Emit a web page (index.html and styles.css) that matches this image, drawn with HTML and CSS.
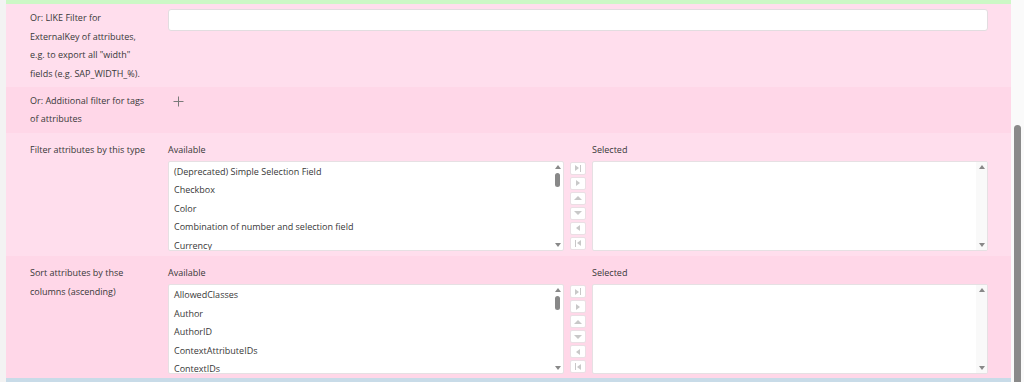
FILE: index.html
```html
<!DOCTYPE html>
<html>
<head>
    <link rel="stylesheet" href="styles.css">
</head>
<body>
  <div class="edge"></div>
  <div class="page">
    <div class="topbar"></div>

    <div class="row light row-like">
      <div class="label">Or: LIKE Filter for ExternalKey of attributes, e.g. to export all "width" fields (e.g. SAP_WIDTH_%).</div>
      <div class="field">
        <input class="text-input" type="text">
      </div>
    </div>

    <div class="row dark row-tags">
      <div class="label">Or: Additional filter for tags of attributes</div>
      <div class="field">
        <svg class="plus" width="11" height="11" viewBox="0 0 11 11">
          <path d="M5.5 0.5v10M0.5 5.5h10" stroke="#7a7a7a" stroke-width="1" fill="none"/>
        </svg>
      </div>
    </div>

    <div class="row light row-list">
      <div class="label">Filter attributes by this type</div>
      <div class="dual">
        <div class="col">
          <div class="col-title">Available</div>
          <div class="listbox">
            <ul class="items">
              <li>(Deprecated) Simple Selection Field</li>
              <li>Checkbox</li>
              <li>Color</li>
              <li>Combination of number and selection field</li>
              <li>Currency</li>
            </ul>
            <div class="vscroll">
              <span class="arr up"></span>
              <span class="thumb"></span>
              <span class="arr down"></span>
            </div>
          </div>
        </div>
        <div class="buttons">
          <span class="btn"><i class="tri right"></i><i class="bar"></i></span>
          <span class="btn"><i class="tri right"></i></span>
          <span class="btn"><i class="tri up"></i></span>
          <span class="btn"><i class="tri down"></i></span>
          <span class="btn"><i class="tri left"></i></span>
          <span class="btn"><i class="bar"></i><i class="tri left"></i></span>
        </div>
        <div class="col">
          <div class="col-title">Selected</div>
          <div class="listbox">
            <ul class="items"></ul>
            <div class="vscroll track">
              <span class="arr up"></span>
              <span class="arr down"></span>
            </div>
          </div>
        </div>
      </div>
    </div>

    <div class="row dark row-list row-last">
      <div class="label">Sort attributes by thse columns (ascending)</div>
      <div class="dual">
        <div class="col">
          <div class="col-title">Available</div>
          <div class="listbox">
            <ul class="items">
              <li>AllowedClasses</li>
              <li>Author</li>
              <li>AuthorID</li>
              <li>ContextAttributeIDs</li>
              <li>ContextIDs</li>
            </ul>
            <div class="vscroll">
              <span class="arr up"></span>
              <span class="thumb"></span>
              <span class="arr down"></span>
            </div>
          </div>
        </div>
        <div class="buttons">
          <span class="btn"><i class="tri right"></i><i class="bar"></i></span>
          <span class="btn"><i class="tri right"></i></span>
          <span class="btn"><i class="tri up"></i></span>
          <span class="btn"><i class="tri down"></i></span>
          <span class="btn"><i class="tri left"></i></span>
          <span class="btn"><i class="bar"></i><i class="tri left"></i></span>
        </div>
        <div class="col">
          <div class="col-title">Selected</div>
          <div class="listbox">
            <ul class="items"></ul>
            <div class="vscroll track">
              <span class="arr up"></span>
              <span class="arr down"></span>
            </div>
          </div>
        </div>
      </div>
    </div>
  </div>
  <div class="scrollbar">
    <div class="scroll-thumb"></div>
  </div>
</body>
</html>
```

FILE: styles.css
```css
html, body {
    margin: 0;
    height: 382px;
    overflow: hidden;
}

body {
    display: flex;
    font-family: "Open Sans", "DejaVu Sans", sans-serif;
    font-size: 9px;
    color: #383838;
    background: #fafafa;
}

.edge {
    width: 6px;
    background: #f3f3f3;
}

.page {
    flex: 1;
    display: flex;
    flex-direction: column;
    background: #ffdeec;
}

.topbar {
    height: 4px;
    background: #ccf8c6;
}

.row {
    display: grid;
    grid-template-columns: 162px 1fr;
    padding-right: 23px;
}

.light {
    background: #ffdeed;
}

.dark {
    background: #ffd7e8;
}

.label {
    padding-left: 24px;
    padding-right: 20px;
    line-height: 18.7px;
}

.row-like {
    height: 83px;
    padding-top: 5px;
    box-sizing: border-box;
}

.text-input {
    display: block;
    width: 100%;
    height: 22px;
    margin: 0;
    box-sizing: border-box;
    border: 1px solid #e2dde0;
    border-radius: 3px;
    background: #fff;
}

.row-tags {
    height: 46px;
    padding-top: 5px;
    box-sizing: border-box;
}

.plus {
    display: block;
    margin: 4px 0 0 5px;
}

.row-list {
    height: 124px;
    padding-top: 8px;
    box-sizing: border-box;
}

.row-last {
    padding-top: 8px;
    border-bottom: 4px solid #c8dbe8;
    box-sizing: content-box;
    height: 114px;
}

.dual {
    display: flex;
    gap: 6px;
}

.col {
    flex: 1;
}

.col-title {
    line-height: 18.7px;
    height: 20px;
}

.listbox {
    display: flex;
    height: 90px;
    background: #fff;
    border: 1px solid #e6e0e3;
    border-radius: 2px;
    box-sizing: border-box;
    overflow: hidden;
}

.items {
    flex: 1;
    list-style: none;
    margin: 0;
    padding: 1px 0 0 5px;
}

.items li {
    line-height: 18.5px;
    white-space: nowrap;
}

.vscroll {
    width: 11px;
    display: flex;
    flex-direction: column;
    align-items: center;
    padding: 3px 0;
    box-sizing: border-box;
}

.vscroll.track {
    background: #f9f9f9;
    justify-content: space-between;
}

.arr {
    width: 0;
    height: 0;
    border-left: 3px solid transparent;
    border-right: 3px solid transparent;
}

.arr.up {
    border-bottom: 4px solid #888;
}

.arr.down {
    border-top: 4px solid #888;
    margin-top: auto;
}

.thumb {
    width: 5px;
    height: 14px;
    margin-top: 4px;
    border-radius: 3px;
    background: #888;
}

.buttons {
    width: 16px;
    display: flex;
    flex-direction: column;
    gap: 2px;
    padding-top: 21px;
}

.btn {
    height: 13px;
    display: flex;
    align-items: center;
    justify-content: center;
    gap: 1px;
    background: #fff;
    border: 1px solid #eadfe4;
    border-radius: 2px;
    box-sizing: border-box;
}

.tri {
    display: block;
    width: 0;
    height: 0;
}

.tri.right {
    border-top: 3px solid transparent;
    border-bottom: 3px solid transparent;
    border-left: 4px solid #c8c8c8;
}

.tri.left {
    border-top: 3px solid transparent;
    border-bottom: 3px solid transparent;
    border-right: 4px solid #c8c8c8;
}

.tri.up {
    border-left: 4px solid transparent;
    border-right: 4px solid transparent;
    border-bottom: 4px solid #c8c8c8;
}

.tri.down {
    border-left: 4px solid transparent;
    border-right: 4px solid transparent;
    border-top: 4px solid #c8c8c8;
}

.bar {
    display: block;
    width: 1px;
    height: 7px;
    background: #c8c8c8;
}

.scrollbar {
    width: 13px;
    background: #fafafa;
    display: flex;
    flex-direction: column;
    align-items: center;
    padding-top: 125px;
    box-sizing: border-box;
}

.scroll-thumb {
    width: 7px;
    flex: 1;
    background: #8a8a8a;
    border-radius: 4px 4px 0 0;
}
```
